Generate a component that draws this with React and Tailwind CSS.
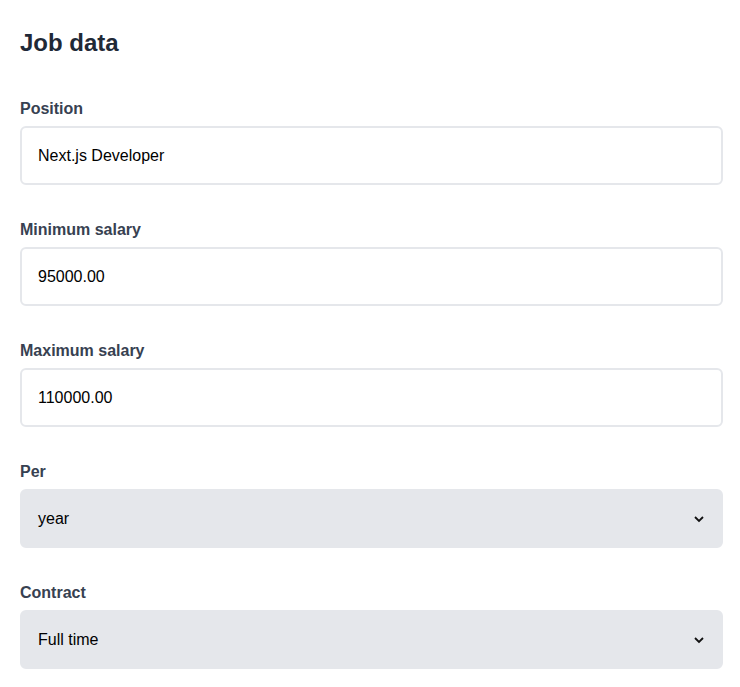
export default function App() {
  const Field = ({ label, value, select }) => (
    <div className="mb-[33px]">
      <div className="text-base leading-6 font-bold text-[#374151] mb-[5px]">{label}</div>
      <div className={`h-[59px] rounded-md border-2 border-[#e5e7eb] flex items-center justify-between pl-4 pr-4 ${select ? "bg-[#e5e7eb]" : "bg-white"}`}>
        <span className="text-base text-black">{value}</span>
        {select && (
          <svg width="12" height="8" viewBox="0 0 12 8" fill="none" stroke="#111" strokeWidth="1.8"><path d="M2 2l4 4 4-4" /></svg>
        )}
      </div>
    </div>
  );
  return (
    <div className="bg-white min-h-[687px] pl-5 pr-[17px] pt-[27px]" style={{ fontFamily: '"Liberation Sans", Arial, sans-serif' }}>
      <h1 className="text-2xl leading-8 font-bold text-[#1f2937] mb-[38px]">Job data</h1>
      <Field label="Position" value="Next.js Developer" />
      <Field label="Minimum salary" value="95000.00" />
      <Field label="Maximum salary" value="110000.00" />
      <Field label="Per" value="year" select />
      <Field label="Contract" value="Full time" select />
    </div>
  );
}
